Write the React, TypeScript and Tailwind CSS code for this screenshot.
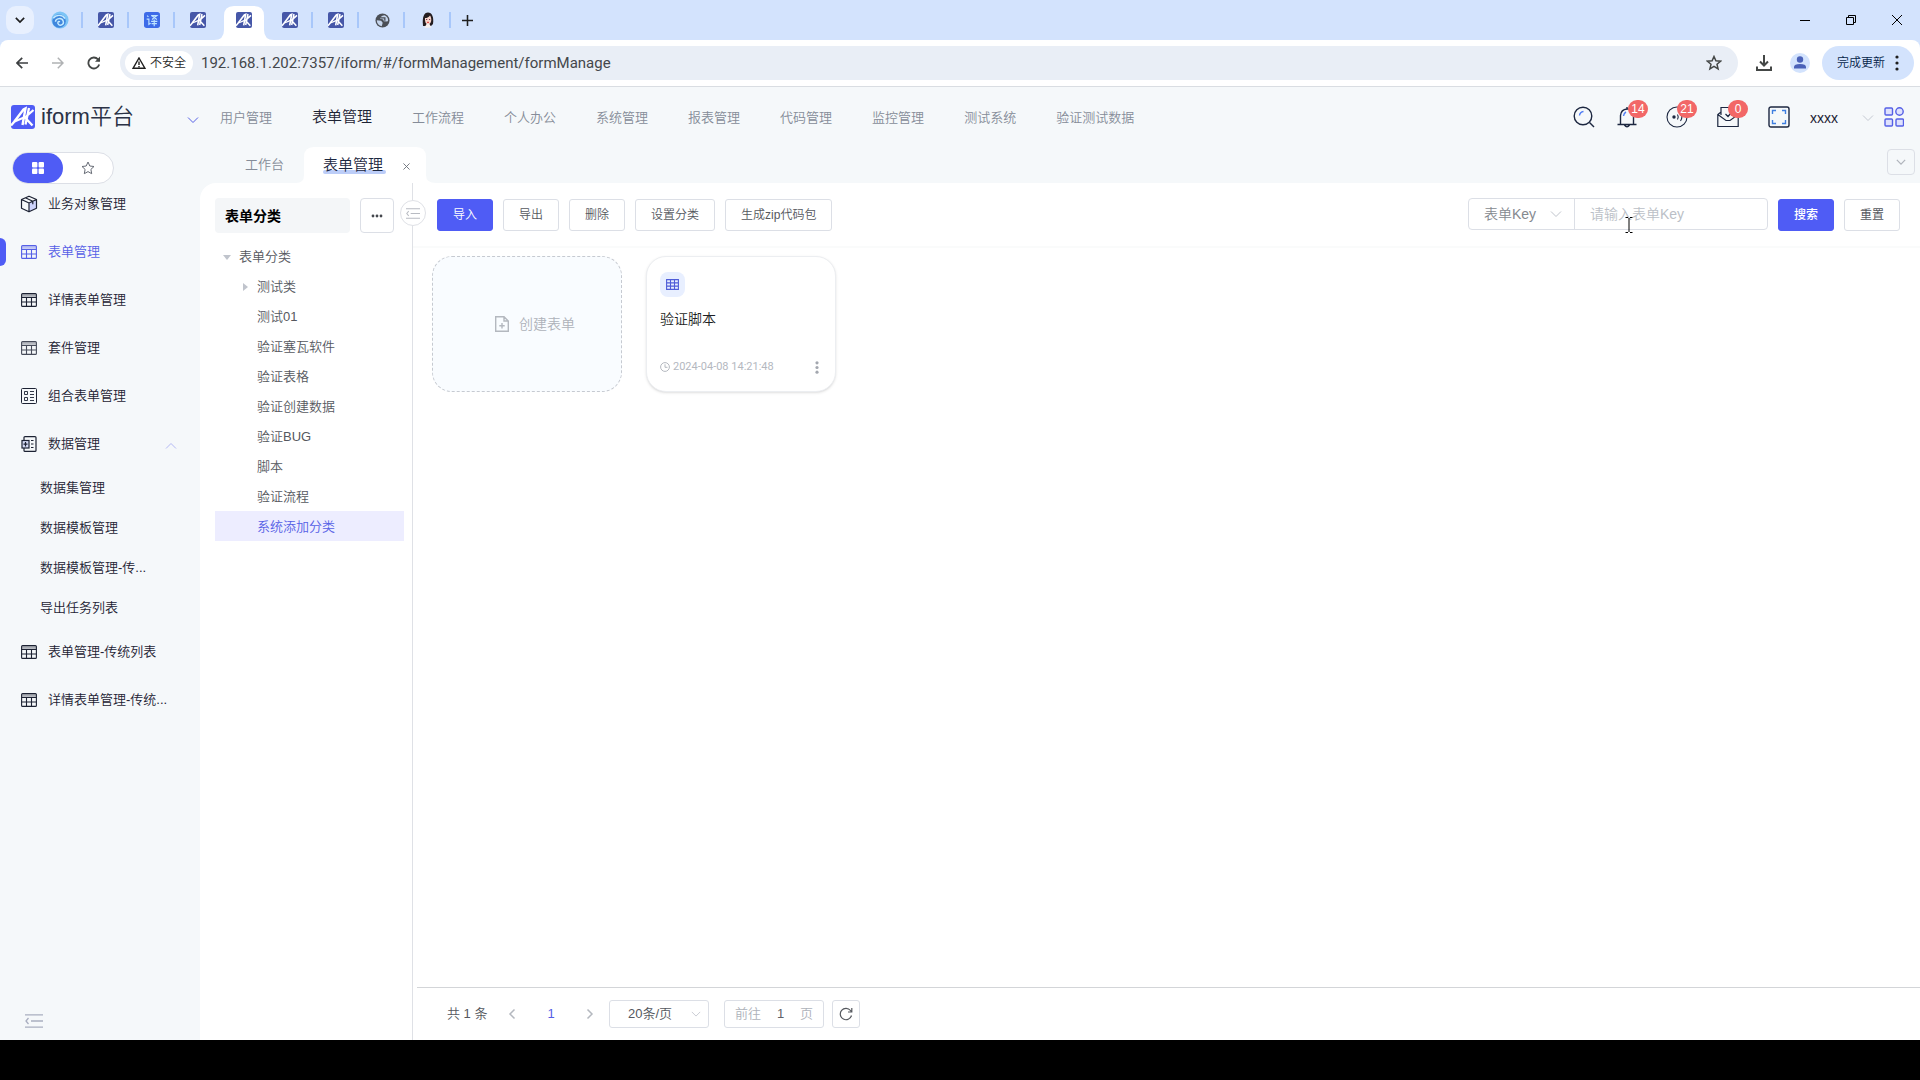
import React from 'react';

type IconProps = { className?: string };

function AkLogo({ className = '', tone = '#4f5cf5' }: IconProps & { tone?: string }) {
  return (
    <svg viewBox="0 0 24 24" className={className} aria-hidden="true">
      <rect width="24" height="24" rx="3" fill={tone} />
      <g stroke="#fff" fill="none">
        <path d="M0 20.500 3 17 12.500 4.500 14.500 3.500 11.500 20" strokeWidth="2.400" />
        <path d="M3.500 16.500 13 12.500" strokeWidth="2" />
        <path d="M18 3 14.500 19.500M22.500 5 14 12.500 21.500 20.500" strokeWidth="2.300" />
      </g>
    </svg>
  );
}

function SwirlIcon() {
  return (
    <svg viewBox="0 0 20 20" className="size-[18px]" aria-hidden="true">
      <circle cx="10" cy="10" r="9.500" fill="#7cc4f6" />
      <circle cx="9" cy="11" r="7.500" fill="#3f86dd" />
      <path d="M2.500 8C6 3.500 13 4 15.500 8.500M5 12c0-4 7-5 8.500-1s-3 6-5 4-.5-4 1.500-3" fill="none" stroke="#c5ebff" strokeWidth="1.600" />
    </svg>
  );
}

function PatternIcon() {
  return (
    <svg viewBox="0 0 18 18" className="size-4" aria-hidden="true">
      <rect width="18" height="18" rx="3" fill="#3d6be8" />
      <path d="M3.500 4 5 5.500M3 8h2.500v6l2-1.500M8 4h6.500L9 8.500M8.500 4l6 4.500M8 10.500h7M8.500 13h6M11.500 8.500V16" fill="none" stroke="#bfe4ff" strokeWidth="1.300" />
    </svg>
  );
}

function GlobeIcon() {
  return (
    <svg viewBox="0 0 16 16" className="size-[15px]" aria-hidden="true">
      <circle cx="8" cy="8" r="7.500" fill="#4b4f56" />
      <path d="M9.500 2.200 6.800 3.500 5.500 6.500 9 7l.8 1.800 3.800-.3.600-1.200C14 4.500 12 2.700 9.500 2.200z" fill="#d3e3fd" transform="rotate(8 9 6)" opacity=".9" />
      <path d="M1.900 7.600 6.500 8.200 8.200 10.500 7.200 14C4 13.500 1.900 11 1.900 7.600z" fill="#d3e3fd" opacity=".9" />
      <path d="M6 5.200h4.500v3" fill="none" stroke="#4b4f56" strokeWidth="1.400" />
    </svg>
  );
}

function PortraitIcon() {
  return (
    <svg viewBox="0 0 16 16" className="size-4" aria-hidden="true">
      <path d="M3 14C2 5 4 .5 8 .5S14 5 13 12l-2 2z" fill="#241d20" />
      <path d="M5 6c2 0 3.500-.5 5-2.500.8 1 1.300 2.500 1.300 4.500s-1.200 4.300-3.300 4.300-3.200-2.300-3-6.300z" fill="#f8d6cb" />
      <path d="M4.500 15.800 6.500 12h3l2 3.800z" fill="#f5efee" />
      <path d="M7 10.300h2" stroke="#d33" />
      <path d="M6 7.500h1.200M9 7.500h1.200" stroke="#513" strokeWidth=".8" />
    </svg>
  );
}

function TableIcon({ className = '' }: IconProps) {
  return (
    <svg viewBox="0 0 16 14" className={`w-4 h-[14px] ${className}`} fill="none" stroke="currentColor" strokeWidth="1.100" aria-hidden="true">
      <rect x=".6" y=".6" width="14.800" height="12.800" rx="1" />
      <path d="M1 2.500h14" strokeOpacity=".35" strokeWidth="2.600" />
      <path d="M.6 4.500h14.800M.6 9h14.800M5.500 4.500v9M10.500 4.500v9" />
    </svg>
  );
}

function CubeIcon() {
  return (
    <svg viewBox="0 0 18 18" className="size-[18px]" fill="none" stroke="currentColor" strokeWidth="1.200" strokeLinejoin="round" aria-hidden="true">
      <path d="M9 8.500v8l7-3V5z" fill="#cdd3fb" stroke="none" />
      <path d="M1.500 4.500 9 1.200l7.500 3.300v8.700L9 16.800l-7.500-3.600zM1.500 4.500 9 8l7.500-3.500M9 8v8.800M5.300 2.800l7.500 3.400v3" />
    </svg>
  );
}

function ComboIcon() {
  return (
    <svg viewBox="0 0 16 16" className="size-4" fill="none" stroke="currentColor" aria-hidden="true">
      <rect x=".5" y=".5" width="15" height="15" rx="1" />
      <path d="M3.500 3.500h3v3h-3zM3.500 9.500h3v3h-3zM9 3.500h4M9 6.500h4M9 9.500h4M9 12.500h4" strokeWidth=".9" />
    </svg>
  );
}

function DataIcon() {
  return (
    <svg viewBox="0 0 16 16" className="size-4" fill="none" stroke="currentColor" strokeWidth="1.200" aria-hidden="true">
      <path d="M3 4.500V1.600q0-1 1-1h10q1 0 1 1v12.800q0 1-1 1H4q-1 0-1-1v-2.400" />
      <rect x="1" y="4.500" width="7" height="7.500" fill="#d5dbf5" />
      <path d="M4.500 6v4.500M2.500 8.200h4M10 4.500h2.500M10 8h2.500M10 11.500h2.500" />
    </svg>
  );
}

function Chevron({ className = '', dir = 'down' }: IconProps & { dir?: 'down' | 'up' | 'left' | 'right' }) {
  const d = {
    down: 'M1 3.500 6 8.500 11 3.500',
    up: 'M1 8.500 6 3.500 11 8.500',
    left: 'M8.500 1.500 4 6 8.500 10.500',
    right: 'M3.500 1.500 8 6 3.500 10.500',
  }[dir];
  return (
    <svg viewBox="0 0 12 12" className={`shrink-0 ${className}`} fill="none" stroke="currentColor" aria-hidden="true">
      <path d={d} />
    </svg>
  );
}

function IndentIcon({ className = '' }: IconProps) {
  return (
    <svg viewBox="0 0 18 14" className={className} fill="none" stroke="currentColor" strokeWidth="1.300" aria-hidden="true">
      <path d="M0 .8h18M6 7h12M0 13.200h18M3.500 4 1 7l2.500 3" />
    </svg>
  );
}

/* Browser chrome */

const tabs: React.ReactNode[] = [
  <SwirlIcon />,
  <AkLogo className="size-4" tone="#4657a8" />,
  <PatternIcon />,
  <AkLogo className="size-4" tone="#4657a8" />,
  <AkLogo className="size-4" tone="#4657a8" />,
  <AkLogo className="size-4" tone="#4657a8" />,
  <AkLogo className="size-4" tone="#4657a8" />,
  <GlobeIcon />,
  <PortraitIcon />,
];
const ACTIVE_TAB = 4;

function TabStrip() {
  return (
    <div className="flex h-10 shrink-0 items-center bg-[#d3e3fd] text-[#1f1f1f]">
      <button aria-label="搜索标签页" className="ml-1.5 flex size-7 items-center justify-center rounded-[10px] bg-[#e8f0fe]">
        <Chevron className="size-2.5 stroke-2" />
      </button>
      <div className="ml-[3px] flex h-full items-center">
        {tabs.map((icon, i) => {
          const active = i === ACTIVE_TAB;
          return (
            <div key={i} className="relative flex h-full w-[46px] items-center justify-center">
              {active && (
                <svg viewBox="0 0 60 34" className="absolute bottom-0 -left-[7px] h-[34px] w-[60px]" aria-hidden="true">
                  <path d="M0 34q10 0 10-10V10Q10 0 20 0h20q10 0 10 10v14q0 10 10 10z" fill="#fff" />
                </svg>
              )}
              <button aria-label={`标签页 ${i + 1}`} className="relative">{icon}</button>
              {!active && i !== ACTIVE_TAB - 1 && <span className="absolute right-0 h-4 w-0.5 bg-[#a8c7fa]" />}
            </div>
          );
        })}
      </div>
      <button aria-label="新标签页" className="ml-[11px]">
        <svg viewBox="0 0 12 12" className="size-[11px]" stroke="currentColor" strokeWidth="1.700" aria-hidden="true">
          <path d="M6 0v12M0 6h12" />
        </svg>
      </button>
      <div className="ml-auto flex items-center">
        <button aria-label="最小化" className="flex w-[46px] justify-center">
          <svg viewBox="0 0 10 10" className="size-2.5" stroke="#000" aria-hidden="true"><path d="M0 5.500h10" /></svg>
        </button>
        <button aria-label="还原" className="flex w-[46px] justify-center">
          <svg viewBox="0 0 10 10" className="size-2.5" stroke="#000" fill="none" aria-hidden="true">
            <path d="M.5 2.500h7v7h-7zM2.500 2.500v-2h7v7h-2" />
          </svg>
        </button>
        <button aria-label="关闭" className="flex w-[46px] justify-center">
          <svg viewBox="0 0 10 10" className="size-2.5" stroke="#000" aria-hidden="true"><path d="M0 0l10 10M10 0 0 10" /></svg>
        </button>
      </div>
    </div>
  );
}

function AddressBar() {
  return (
    <div className="shrink-0 bg-[#d3e3fd]">
      <div className="flex h-[47px] items-center rounded-t-lg border-b border-[#d9dde2] bg-white pr-1.5 pl-4 text-[#444746]">
        <button aria-label="后退" className="text-[#3c3f41]">
          <svg viewBox="0 0 12 12" className="size-3" fill="none" stroke="currentColor" strokeWidth="1.700" aria-hidden="true"><path d="M12 6H1M6.200 .8 1 6l5.200 5.200" /></svg>
        </button>
        <button aria-label="前进" className="ml-6 text-[#b0b2b4]">
          <svg viewBox="0 0 12 12" className="size-3" fill="none" stroke="currentColor" strokeWidth="1.500" aria-hidden="true"><path d="M0 6h11M5.800 .8 11 6l-5.200 5.200" /></svg>
        </button>
        <button aria-label="重新加载" className="ml-[23px]">
          <svg viewBox="0 0 14 14" className="size-3.5" fill="none" stroke="currentColor" strokeWidth="1.800" aria-hidden="true">
            <path d="M12.200 8.500A5.500 5.500 0 1 1 11 3.300L12.500 5" />
            <path d="M13 .5V5.700H8z" fill="currentColor" stroke="none" />
          </svg>
        </button>
        <div className="ml-[19px] flex h-[34px] flex-1 items-center rounded-full bg-[#e9eef6] pr-4 pl-[5px]">
          <button className="flex h-6 w-[68px] items-center justify-center gap-1 rounded-full bg-white text-xs text-[#1f1f1f]">
            <svg viewBox="0 0 14 12" className="h-3 w-3.5" fill="none" stroke="currentColor" strokeWidth="1.400" aria-hidden="true">
              <path d="M7 1 13 11.300H1zM7 4.500v3.500M7 9v1.200" />
            </svg>
            不安全
          </button>
          <input
            aria-label="地址"
            defaultValue="192.168.1.202:7357/iform/#/formManagement/formManage"
            className="ml-2 flex-1 bg-transparent font-['Roboto','Noto_Sans',sans-serif] text-[15px] font-normal text-[#44474b] outline-none"
          />
          <button aria-label="收藏">
            <svg viewBox="0 0 16 16" className="size-4" fill="none" stroke="currentColor" strokeWidth="1.500" aria-hidden="true">
              <path d="m8 1.500 1.900 4.300 4.700.4-3.600 3.100 1.100 4.600L8 11.400l-4.100 2.500L5 9.300 1.400 6.200l4.700-.4z" />
            </svg>
          </button>
        </div>
        <button aria-label="下载" className="ml-[18px]">
          <svg viewBox="0 0 16 16" className="size-4" fill="none" stroke="currentColor" strokeWidth="2" aria-hidden="true">
            <path d="M8 0v10M4 6.500l4 4 4-4M1 11.500V15h14v-3.500" />
          </svg>
        </button>
        <button aria-label="个人资料" className="ml-[18px]">
          <svg viewBox="0 0 20 20" className="size-5" aria-hidden="true">
            <circle cx="10" cy="10" r="10" fill="#d3e3fd" />
            <circle cx="10" cy="6.500" r="3.200" fill="#4b62b8" />
            <path d="M4 15.500v-1.500q0-3 6-3t6 3v1.500z" fill="#4b62b8" />
          </svg>
        </button>
        <button className="ml-3 flex h-[34px] items-center gap-2.5 rounded-full bg-[#d3e3fd] pr-[15px] pl-[15px] text-xs text-[#041e49]">
          完成更新
          <svg viewBox="0 0 4 16" className="h-4 w-1" fill="#1f1f1f" aria-hidden="true">
            <circle cx="2" cy="2" r="1.600" /><circle cx="2" cy="8" r="1.600" /><circle cx="2" cy="14" r="1.600" />
          </svg>
        </button>
      </div>
    </div>
  );
}

/* Application header */

const navItems = ['用户管理', '表单管理', '工作流程', '个人办公', '系统管理', '报表管理', '代码管理', '监控管理', '测试系统', '验证测试数据'];

function Badge({ value }: { value: string }) {
  return (
    <span className="absolute -top-1.5 left-[11px] flex h-[18px] min-w-5 items-center justify-center rounded-full bg-[#f26767] px-[3px] text-xs leading-none text-white">
      {value}
    </span>
  );
}

function Header() {
  return (
    <header className="flex h-[60px] shrink-0 items-center">
      <div className="flex w-[200px] items-center pr-px pl-[11px]">
        <AkLogo className="size-6" />
        <span className="ml-1.5 text-[22px] leading-7 text-[#2b3245]">iform平台</span>
        <button aria-label="切换平台" className="mt-1.5 ml-auto text-[#5560e6]"><Chevron className="size-3" /></button>
      </div>
      <nav className="ml-5 flex items-center gap-10 pt-px">
        {navItems.map((n, i) => (
          <a key={n} href="#" className={i === 1 ? 'text-[15px] text-[#1c2233]' : 'text-[13px] text-[#858c98]'}>{n}</a>
        ))}
      </nav>
      <div className="ml-auto flex items-center pr-4 pb-px text-[#1c2740]">
        <button aria-label="搜索">
          <svg viewBox="0 0 22 22" className="size-[22px]" fill="none" stroke="currentColor" strokeWidth="1.400" aria-hidden="true">
            <circle cx="10" cy="10" r="8.800" /><path d="m16.500 16.500 4.500 4.500" />
            <path d="M6.500 9.500Q7 6 10.500 5.500" stroke="#4f7cf5" />
          </svg>
        </button>
        <button aria-label="通知" className="relative ml-[22px]">
          <svg viewBox="0 0 20 22" className="h-[22px] w-5" fill="none" stroke="currentColor" strokeWidth="1.400" aria-hidden="true">
            <path d="M.5 18.500h19M3.500 18.500V9.500Q4 3.500 10 3t6.500 6.500v9M10 3V1M7.500 19q2.500 3.500 5 0" />
            <path d="M6.500 10Q7 7 9 6" stroke="#4f7cf5" />
          </svg>
          <Badge value="14" />
        </button>
        <button aria-label="消息" className="relative ml-[29px]">
          <svg viewBox="0 0 22 22" className="size-[22px]" fill="none" stroke="currentColor" strokeWidth="1.100" aria-hidden="true">
            <circle cx="11" cy="11" r="10" /><circle cx="8" cy="11" r="1.700" fill="currentColor" stroke="none" />
            <path d="M11.500 8.500q1.500 2.500 0 5M14.500 7q2.800 4 0 8" />
          </svg>
          <Badge value="21" />
        </button>
        <button aria-label="邮件" className="relative ml-[29px]">
          <svg viewBox="0 0 22 22" className="size-[22px]" fill="none" stroke="currentColor" strokeWidth="1.200" aria-hidden="true">
            <path d="M4 9V1.500h14V9M4 6 .8 8.500v12h20.400v-12L18 6M.8 8.500 9 14.500h4l8.200-6M8.500 8l2.500 2.500 3-3.500" />
          </svg>
          <Badge value="0" />
        </button>
        <button aria-label="全屏" className="ml-[29px]">
          <svg viewBox="0 0 22 22" className="size-[22px]" fill="none" stroke="currentColor" strokeWidth="1.400" aria-hidden="true">
            <rect x="1" y="1" width="20" height="20" rx="2" />
            <path d="M4.500 8V4.500H8M14 4.500h3.500V8M17.500 14v3.500H14M8 17.500H4.500V14" stroke="#3f7fe0" />
          </svg>
        </button>
        <button className="ml-5 flex items-center pt-0.5 text-sm text-[#1c2233]">
          xxxx
          <Chevron className="ml-6 size-3 text-[#c5cad3]" />
        </button>
        <button aria-label="应用" className="ml-2.5">
          <svg viewBox="0 0 20 20" className="size-5" fill="#dfe2fd" stroke="#5560e6" strokeWidth="1.400" aria-hidden="true">
            <rect x="1" y="1" width="7.500" height="7" rx="1" /><circle cx="15.500" cy="4.500" r="3.700" />
            <rect x="1" y="12" width="7.500" height="7" rx="1" /><rect x="12" y="12" width="7.500" height="7" rx="1" />
          </svg>
        </button>
      </div>
    </header>
  );
}

/* Sidebar */

type MenuItem = { label: string; icon: React.ReactNode; active?: boolean; children?: string[] };

const menu: MenuItem[] = [
  { label: '业务对象管理', icon: <CubeIcon /> },
  { label: '表单管理', icon: <TableIcon />, active: true },
  { label: '详情表单管理', icon: <TableIcon /> },
  { label: '套件管理', icon: <TableIcon className="opacity-80" /> },
  { label: '组合表单管理', icon: <ComboIcon /> },
  { label: '数据管理', icon: <DataIcon />, children: ['数据集管理', '数据模板管理', '数据模板管理-传...', '导出任务列表'] },
  { label: '表单管理-传统列表', icon: <TableIcon /> },
  { label: '详情表单管理-传统...', icon: <TableIcon /> },
];

function Sidebar() {
  return (
    <aside className="flex w-[200px] shrink-0 flex-col pt-[5px]">
      <div className="z-10 ml-3 flex h-8 w-[102px] shrink-0 items-center rounded-full border border-[#dcdfe6] bg-white">
        <button aria-label="菜单" className="flex h-[30px] w-[50px] items-center justify-center rounded-full bg-[#4f5cf5]">
          <svg viewBox="0 0 12 12" className="size-3" fill="#fff" aria-hidden="true">
            <rect width="5.400" height="5.400" rx="1" /><rect x="6.600" width="5.400" height="5.400" rx="1" />
            <rect y="6.600" width="5.400" height="5.400" rx="1" /><rect x="6.600" y="6.600" width="5.400" height="5.400" rx="1" />
          </svg>
        </button>
        <button aria-label="收藏夹" className="flex flex-1 justify-center text-[#666b75]">
          <svg viewBox="0 0 14 14" className="size-3.5" fill="none" stroke="currentColor" strokeLinejoin="round" aria-hidden="true">
            <path d="m7 1 1.800 4 4.200.5-3.100 2.900.8 4.300L7 10.600l-3.700 2.100.8-4.300L1 5.500 5.200 5z" />
          </svg>
        </button>
      </div>
      <nav className="-mt-1 flex flex-col text-[13px] text-[#1c2233]">
        {menu.map((m) => (
          <div key={m.label}>
            <a href="#" className={`relative flex h-12 items-center pr-[23px] pl-5 ${m.active ? 'text-[#5560e6]' : ''}`}>
              {m.active && <span className="absolute left-0 h-7 w-1.5 rounded-r-md bg-[#4f5cf5]" />}
              <span className="flex w-[18px] justify-center">{m.icon}</span>
              <span className="ml-2.5 flex-1 whitespace-nowrap">{m.label}</span>
              {m.children && <Chevron dir="up" className="mt-1 size-3 text-[#b4b9f5]" />}
            </a>
            {m.children?.map((c) => (
              <a key={c} href="#" className="flex h-10 items-center pl-10">{c}</a>
            ))}
          </div>
        ))}
      </nav>
      <button aria-label="收起菜单" className="mt-auto mb-3 ml-[25px] w-[18px] text-[#a9aec0]">
        <IndentIcon className="h-3.5 w-[18px]" />
      </button>
    </aside>
  );
}

/* Category tree */

const categories = ['测试类', '测试01', '验证塞瓦软件', '验证表格', '验证创建数据', '验证BUG', '脚本', '验证流程', '系统添加分类'];

function CategoryPanel() {
  return (
    <section className="relative w-[213px] shrink-0 border-r border-[#dfe1e6] pr-2 pl-[15px]">
      <div className="flex pt-[15px]">
        <h2 className="flex h-[35px] w-[135px] items-center rounded bg-[#f4f6f8] pl-2.5 text-sm font-bold text-black">表单分类</h2>
        <button aria-label="更多" className="ml-2.5 flex h-[35px] w-[34px] items-center justify-center rounded border border-[#dcdfe6]">
          <svg viewBox="0 0 12 4" className="h-1 w-3" fill="#44474d" aria-hidden="true">
            <circle cx="2" cy="2" r="1.400" /><circle cx="6" cy="2" r="1.400" /><circle cx="10" cy="2" r="1.400" />
          </svg>
        </button>
      </div>
      <button aria-label="收起分类" className="absolute top-[17px] -right-[14px] flex size-[26px] items-center justify-center rounded-full border border-[#dfe1e6] bg-white text-[#b8bbc2]">
        <IndentIcon className="h-[11px] w-3.5" />
      </button>
      <ul className="mt-2 text-[13px] text-[#55585e]">
        <li className="flex h-[30px] items-center pt-px pl-2">
          <svg viewBox="0 0 8 8" className="size-2" fill="#c0c4cc" aria-hidden="true"><path d="M0 2h8L4 7z" /></svg>
          <span className="ml-2">表单分类</span>
        </li>
        {categories.map((c, i) => (
          <li key={c}>
            <a href="#" className={`flex h-[30px] items-center pt-px ${i === 8 ? 'bg-[#ededff] text-[#5560e6]' : ''}`}>
              <span className="flex w-[42px] justify-end pr-2">
                {i === 0 && <svg viewBox="0 0 8 8" className="size-2" fill="#c0c4cc" aria-hidden="true"><path d="M2 0v8l5-4z" /></svg>}
              </span>
              {c}
            </a>
          </li>
        ))}
      </ul>
    </section>
  );
}

/* Form list */

function ToolButton({ children, primary = false, className = '' }: { children: React.ReactNode; primary?: boolean; className?: string }) {
  return (
    <button
      className={`h-8 rounded-[3px] border px-[15px] text-xs ${primary ? 'border-[#4f5cf5] bg-[#4f5cf5] text-white' : 'border-[#dcdfe6] bg-white text-[#55585e]'} ${className}`}
    >
      {children}
    </button>
  );
}

function Toolbar() {
  return (
    <div className="flex h-[65px] shrink-0 items-start border-b-2 border-[#fafbfb] pt-4 pr-5 pl-6">
      <div className="flex gap-2.5">
        <ToolButton primary>导入</ToolButton>
        <ToolButton>导出</ToolButton>
        <ToolButton>删除</ToolButton>
        <ToolButton>设置分类</ToolButton>
        <ToolButton>生成zip代码包</ToolButton>
      </div>
      <form className="ml-auto flex gap-2.5" onSubmit={(e) => e.preventDefault()}>
        <div className="-mt-px flex h-8 w-[300px] rounded border border-[#dcdfe6] text-sm">
          <div className="relative flex w-[106px] items-center border-r border-[#dcdfe6]">
            <select aria-label="搜索字段" className="h-full w-full appearance-none bg-transparent pl-[15px] text-[#85898f] outline-none">
              <option>表单Key</option>
            </select>
            <Chevron className="pointer-events-none absolute right-3 size-3 text-[#c0c4cc]" />
          </div>
          <div className="relative flex-1">
            <input aria-label="关键字" placeholder="请输入表单Key" className="h-full w-full bg-transparent px-[15px] outline-none placeholder:text-[#bbbfc7]" />
            <svg viewBox="0 0 8 16" className="pointer-events-none absolute top-[18px] left-[50px] h-4 w-2" stroke="#000" fill="none" aria-hidden="true">
              <path d="M.5 .5H3M5 .5h2.500M4 1v14M.5 15.500H3M5 15.500h2.500" />
            </svg>
          </div>
        </div>
        <ToolButton primary className="font-medium">搜索</ToolButton>
        <ToolButton className="font-normal">重置</ToolButton>
      </form>
    </div>
  );
}

function Cards() {
  return (
    <div className="flex flex-1 flex-wrap content-start gap-6 pt-2 pl-[19px]">
      <button className="flex h-[136px] w-[190px] items-center justify-center gap-2.5 rounded-[20px] border border-dashed border-[#c6cad1] bg-[#f9fcff] pl-4 text-sm text-[#aeb2ba]">
        <svg viewBox="0 0 14 16" className="h-4 w-3.5" fill="none" stroke="#b4b8bf" strokeWidth="1.400" aria-hidden="true">
          <path d="M.7 .7h8.300l4.300 4.300v10.300H.7zM9 .7V5h4.300M7 7v5.500M4.300 9.800h5.400" />
        </svg>
        创建表单
      </button>
      <article className="flex h-[136px] w-[190px] flex-col rounded-[20px] border border-[#eceef1] bg-white px-[13px] pt-[15px] shadow-sm">
        <span className="flex size-[25px] items-center justify-center rounded-lg bg-[#e8efff]">
          <svg viewBox="0 0 13 11" className="h-[11px] w-[13px]" fill="none" stroke="#4f5cd8" strokeWidth="1.100" aria-hidden="true">
            <path d="M.6 .6h11.800v9.800H.6zM.6 3.900h11.800M.6 7.100h11.800M4.500 .6v9.800M8.500 .6v9.800" />
          </svg>
        </span>
        <h3 className="mt-3 text-sm text-[#1d1f24]">验证脚本</h3>
        <div className="mt-7 flex items-center text-[11px] leading-5 text-[#b4b8bf]">
          <svg viewBox="0 0 10 10" className="size-2.5" fill="none" stroke="currentColor" aria-hidden="true">
            <circle cx="5" cy="5" r="4.400" /><path d="M5 2.300V5.300h2.500" />
          </svg>
          <time className="ml-[3px] font-['Roboto','Liberation_Sans',sans-serif] font-normal">2024-04-08 14:21:48</time>
          <button aria-label="更多操作" className="ml-auto pr-[3px]">
            <svg viewBox="0 0 4 14" className="h-[13px] w-1" fill="#a3a7af" aria-hidden="true">
              <circle cx="2" cy="2" r="1.700" /><circle cx="2" cy="7" r="1.700" /><circle cx="2" cy="12" r="1.700" />
            </svg>
          </button>
        </div>
      </article>
    </div>
  );
}

function Pagination() {
  return (
    <footer className="ml-1 flex h-[53px] shrink-0 items-center border-t border-[#d3d5d8] pl-[30px] text-[13px] text-[#55585e]">
      <span className="w-10 whitespace-nowrap">共 1 条</span>
      <button aria-label="上一页" className="ml-[19px] text-[#b4b8bf]"><Chevron dir="left" className="size-3 stroke-[1.5]" /></button>
      <button aria-current="page" className="w-[66px] text-[#5560e6]">1</button>
      <button aria-label="下一页" className="text-[#b4b8bf]"><Chevron dir="right" className="size-3 stroke-[1.5]" /></button>
      <div className="relative ml-[13px] flex h-7 w-[100px] items-center rounded-[3px] border border-[#dcdfe6]">
        <select aria-label="每页条数" className="h-full w-full appearance-none bg-transparent pl-[18px] outline-none">
          <option>20条/页</option>
        </select>
        <Chevron className="pointer-events-none absolute right-[7px] size-2.5 text-[#c0c4cc]" />
      </div>
      <label className="ml-[15px] flex h-7 w-[100px] items-center rounded-[3px] border border-[#dcdfe6] px-2.5 text-[#aeb2ba]">
        前往
        <input defaultValue="1" className="w-0 min-w-0 flex-1 bg-transparent text-center text-[#5f6268] outline-none" />
        页
      </label>
      <button aria-label="刷新" className="ml-2 flex size-7 items-center justify-center rounded-[3px] border border-[#dcdfe6]">
        <svg viewBox="0 0 14 14" className="size-3.5" fill="none" stroke="currentColor" strokeWidth="1.200" aria-hidden="true">
          <path d="M12.500 8.500A5.700 5.700 0 1 1 11.500 3.500L12.700 5M12.800 1v4H9" />
        </svg>
      </button>
    </footer>
  );
}

function PageTabs() {
  return (
    <div className="flex h-9 shrink-0 items-center pr-[5px]">
      <a href="#" className="ml-[45px] text-[13px] text-[#858c98]">工作台</a>
      <div className="relative ml-5 flex h-full items-center">
        <svg viewBox="0 0 140 36" preserveAspectRatio="none" className="absolute inset-y-0 -left-2 h-9 w-[140px]" aria-hidden="true">
          <path d="M0 36q8 0 8-8V10Q8 0 18 0h102q10 0 10 10v18q0 8 10 8z" fill="#fff" />
        </svg>
        <a href="#" className="relative ml-[19px] text-[15px] leading-5 text-[#1c2740]">
          <span className="absolute -right-[3px] bottom-px left-0 h-1 rounded-full bg-[#bccdf8]" />
          <span className="relative">表单管理</span>
        </a>
        <button aria-label="关闭标签" className="relative mt-0.5 ml-5">
          <svg viewBox="0 0 8 8" className="size-[7px]" stroke="#666b75" aria-hidden="true"><path d="m.5 .5 7 7M7.500 .5l-7 7" /></svg>
        </button>
      </div>
      <button aria-label="标签列表" className="mb-1.5 ml-auto flex h-[26px] w-7 items-center justify-center rounded border border-[#dcdfe6] text-[#b0b4bc]">
        <Chevron className="size-2.5 stroke-[1.5]" />
      </button>
    </div>
  );
}

export default function App() {
  return (
    <div className="flex h-screen flex-col bg-[#f5f8fa] font-['Liberation_Sans','Noto_Sans_CJK_SC',sans-serif] font-[350]">
      <TabStrip />
      <AddressBar />
      <Header />
      <div className="flex min-h-0 flex-1">
        <Sidebar />
        <div className="flex min-w-0 flex-1 flex-col">
          <PageTabs />
          <main className="flex min-h-0 flex-1 rounded-tl-2xl bg-white">
            <CategoryPanel />
            <div className="flex min-w-0 flex-1 flex-col">
              <Toolbar />
              <Cards />
              <Pagination />
            </div>
          </main>
        </div>
      </div>
      <div className="h-10 shrink-0 bg-black" />
    </div>
  );
}
